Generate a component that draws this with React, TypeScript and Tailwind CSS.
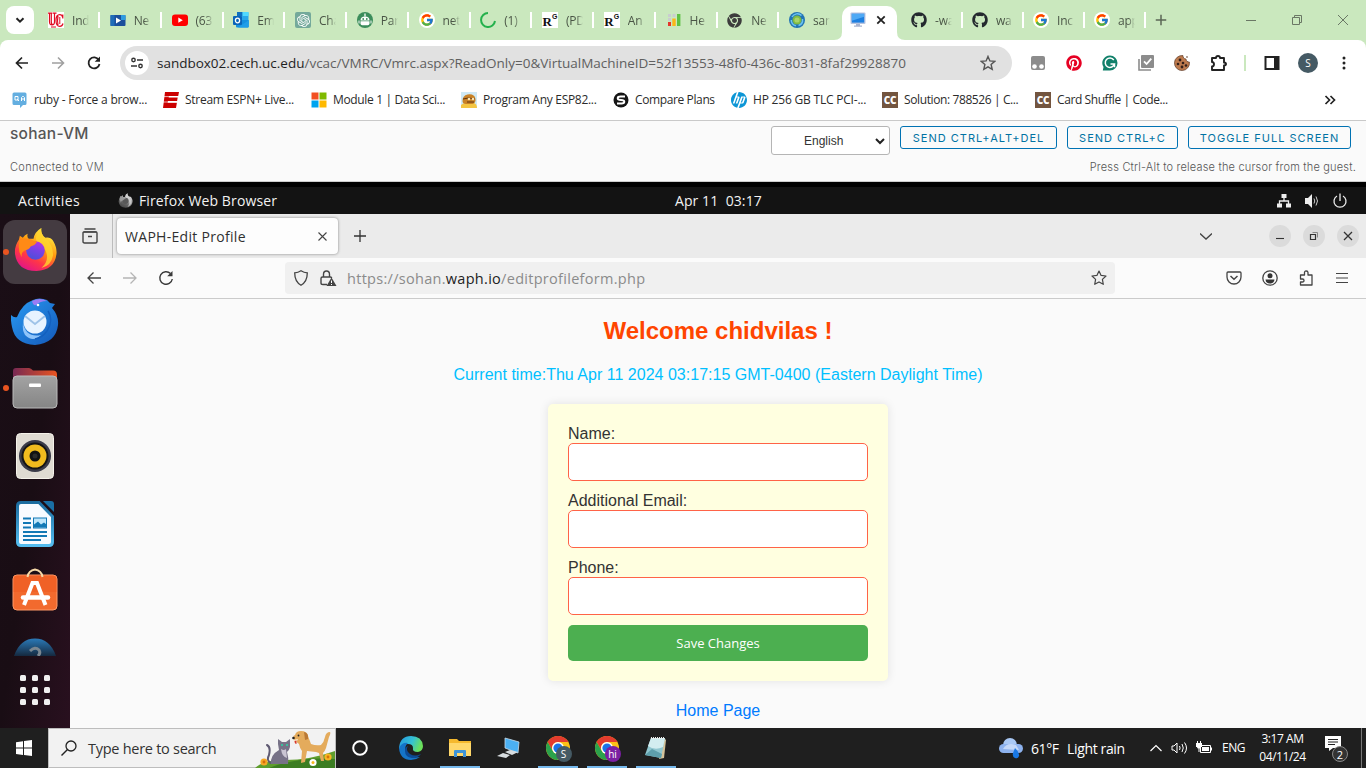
import React from "react";
import { FaGithub, FaPinterest, FaChrome } from "react-icons/fa";
import { FcGoogle } from "react-icons/fc";
import { SiOpenai, SiHp } from "react-icons/si";

type SvgProps = { className?: string; box?: string; children: React.ReactNode };

const Svg = ({ className = "size-4", box = "0 0 16 16", children }: SvgProps) => (
  <svg viewBox={box} className={`${className} shrink-0`} fill="none">
    {children}
  </svg>
);

/* ---------- Favicons ---------- */

const UcIcon = () => (
  <div className="size-4 shrink-0 bg-white">
    <Svg>
      <path d="M0 1.200h4.500M5 1.200h3.500M1.500 1.500v8q0 3.500 2.500 3.500t2.500-3.500V1.500M3.300 1.500v8.500q0 2 1.200 2.600" stroke="#e00b22" strokeWidth="1.200" />
      <path d="M14.800 5.500q-.8-2.800-3-2.800Q8 2.700 8 8.500t3.900 5.800q2.300 0 3.100-2.800M10 4q-1 4.500 0 9M14.800 2.500v4" stroke="#e00b22" strokeWidth="1.200" />
      <path d="M3 15h5M11.800 5v7" stroke="#e00b22" strokeWidth="1" />
    </Svg>
  </div>
);

const VideoIcon = () => (
  <Svg>
    <rect x="0.5" y="3" width="15" height="11" rx="1" fill="#1b4f9c" />
    <rect x="11" y="3" width="4.500" height="5" fill="#2e9be0" />
    <rect x="0.5" y="3" width="4" height="11" fill="#1f6cb8" />
    <path d="M6 5.500v6l5-3z" fill="#fff" />
  </Svg>
);

const YoutubeIcon = () => (
  <Svg>
    <rect x="0" y="2.500" width="16" height="11.500" rx="3" fill="#f00" />
    <path d="M6.300 5.600v5.200l4.500-2.600z" fill="#fff" />
  </Svg>
);

const OutlookIcon = () => (
  <Svg>
    <rect x="4" y="0" width="11.500" height="12" rx="1" fill="#28a8ea" />
    <rect x="4" y="0" width="5.500" height="4" fill="#0f6fc0" />
    <rect x="9.500" y="0" width="6" height="4" fill="#50d9ff" />
    <path d="M3 8h12.700v6.500q0 1-1 1H4q-1 0-1-1z" fill="#1490df" />
    <path d="M5 15.500l10.700-7.300v6.300q0 1-1 1z" fill="#1f9de8" />
    <rect x="0" y="4" width="9" height="9" rx="1" fill="#0a64b8" />
    <ellipse cx="4.500" cy="8.500" rx="2.100" ry="2.300" stroke="#fff" strokeWidth="1.300" />
  </Svg>
);

const ChatIcon = () => (
  <div className="flex size-4 shrink-0 items-center justify-center rounded-[2px] bg-[#74a99b] text-white">
    <SiOpenai className="size-[13px]" />
  </div>
);

const RobotIcon = () => (
  <Svg>
    <circle cx="8" cy="8" r="8" fill="#3b8d5b" />
    <path d="M8 1.500v3" stroke="#fff" strokeWidth="1.300" />
    <path d="M3.500 8.500q0-4 4.500-4t4.500 4z" fill="#fff" />
    <path d="M3.500 9.300h9v2.200q0 1.700-1.700 1.700H5.200q-1.700 0-1.700-1.700z" fill="#fff" />
    <circle cx="6.200" cy="7" r=".9" fill="#3b8d5b" />
    <circle cx="9.800" cy="7" r=".9" fill="#3b8d5b" />
    <path d="M2 8.500v3M14 8.500v3" stroke="#fff" />
  </Svg>
);

const GoogleIcon = () => (
  <div className="flex size-4 shrink-0 items-center justify-center rounded-full bg-white">
    <FcGoogle className="size-[14px]" />
  </div>
);

const SpinnerIcon = () => (
  <Svg>
    <path d="M8 1A7 7 0 1 0 15 9" stroke="#24b14c" strokeWidth="2" />
  </Svg>
);

const ResearchIcon = () => (
  <div className="flex size-4 shrink-0 items-start justify-center bg-white font-['Liberation_Serif',serif] leading-none text-[#111]">
    <span className="mt-[3px] text-[13px] font-bold">R</span>
    <span className="mt-px font-['Liberation_Sans',sans-serif] text-[7px] font-bold">G</span>
  </div>
);

const BarsIcon = () => (
  <Svg>
    <rect x="2" y="2" width="3" height="3" fill="#c9ccd0" />
    <rect x="6.500" y="2" width="3" height="3" fill="#c9ccd0" />
    <rect x="2" y="6" width="3" height="3" fill="#c9ccd0" />
    <rect x="2" y="10" width="3" height="4" fill="#e5352b" />
    <rect x="6.300" y="6.500" width="3.400" height="7.500" fill="#fbb617" />
    <rect x="11" y="2" width="3.400" height="12" fill="#5ec144" />
  </Svg>
);

const GlobeIcon = () => (
  <Svg>
    <circle cx="8" cy="8" r="8" fill="#2274b5" />
    <path d="M3 5a6 6 0 0 1 9.500-1.500M13.500 7a6 6 0 0 1-4 6.500M7 13.800A6 6 0 0 1 2.300 8" stroke="#6cc4f0" strokeWidth="1.500" />
    <circle cx="8" cy="8" r="4.500" fill="#7fba45" />
    <circle cx="8" cy="8" r="2.600" fill="#a8d468" />
  </Svg>
);

const MonitorIcon = () => (
  <Svg>
    <rect x="0.500" y="0.500" width="15" height="11.500" rx="1" fill="#b8c4e0" />
    <rect x="1.800" y="1.800" width="12.400" height="8.800" fill="#1d7fe0" />
    <path d="M1.800 1.800h12.400v3l-12.400 4z" fill="#4fa9f5" />
    <path d="M6 12h4v1.500h2v1.300H4v-1.300h2z" fill="#a9b4cf" />
  </Svg>
);

const CcIcon = () => (
  <div className="flex size-4 shrink-0 items-center justify-center bg-[#73553f] font-['Open_Sans',sans-serif] text-[10px] leading-none font-extrabold tracking-[-0.300px] text-white">
    CC
  </div>
);

const Ruby = () => (
  <Svg>
    <path d="M2 0.500h11q1.500 0 1.500 1.500v9.500q0 1.500-1.500 1.500h-2l-3 3v-3H2Q.5 13 .5 11.500V2Q.5.500 2 .500z" fill="#63aee0" />
    <path d="M3 4.500h3v3.500H3zM5 7l2 2M9.500 9V5.500l1-1h1l1 1V9M9.500 7h3" stroke="#fff" strokeWidth="1" />
  </Svg>
);

const Espn = () => (
  <Svg>
    <path d="M2 0h14l-.8 4H6l-.3 1.500h9l-.6 3.500H5l-.3 1.700h9.200L13 16H0z" fill="#c00" />
    <path d="M1 4.600h14M0 10h14" stroke="#fff" strokeWidth=".7" />
  </Svg>
);

const Microsoft = () => (
  <Svg>
    <path d="M.5.500h7v7h-7z" fill="#f25022" />
    <path d="M8.500.500h7v7h-7z" fill="#7fba00" />
    <path d="M.5 8.500h7v7h-7z" fill="#00a4ef" />
    <path d="M8.500 8.500h7v7h-7z" fill="#ffb900" />
  </Svg>
);

const Program = () => (
  <Svg>
    <rect width="16" height="16" fill="#cfe9f5" />
    <path d="M0 16v-3q2-2 5-2h8q3 1 3 5z" fill="#f4c542" />
    <path d="M1.500 9q0-5.500 5-6.500Q13.500 1.500 14.500 7q.5 4-3 5H5Q1.500 12 1.500 9z" fill="#c98226" />
    <path d="M2 7q5-2 12 0M6 10h7" stroke="#5e3311" strokeWidth="1" />
    <circle cx="8" cy="7" r="1.300" fill="#f8e3b0" />
    <circle cx="12" cy="7" r="1.300" fill="#f8e3b0" />
  </Svg>
);

const SpIcon = () => (
  <Svg>
    <circle cx="8" cy="8" r="7.500" fill="#151515" />
    <path d="M12 4.500H7.500q-2.800 0-2.800 1.700T8 8t3.300 1.800-2.800 1.700H4" stroke="#fff" strokeWidth="1.900" />
  </Svg>
);

/* ---------- Larger artwork ---------- */

const FirefoxLogo = ({ className }: { className: string }) => (
  <Svg className={className} box="0 0 44 46">
    <defs>
      <linearGradient id="ffBody" x1=".8" y1=".1" x2=".3" y2="1">
        <stop offset="0" stopColor="#fff044" />
        <stop offset=".4" stopColor="#ff980e" />
        <stop offset=".7" stopColor="#ff3647" />
        <stop offset="1" stopColor="#e31587" />
      </linearGradient>
      <linearGradient id="ffBall" x1=".7" y1="0" x2=".3" y2="1">
        <stop offset="0" stopColor="#b833e1" />
        <stop offset=".5" stopColor="#7542e5" />
        <stop offset="1" stopColor="#4a50d8" />
      </linearGradient>
    </defs>
    <path d="M28 1q-1 6 4 10 5-1 8 3 4 7 3.500 13Q42 44 23 45 3 45 1 27q-.5-8 4-14l1-4 3 2q2-3 5-4-1 3 1 5h5q1-7 8-11z" fill="url(#ffBody)" />
    <path d="M28 1q-1 6 4 10 8 7 8 18-2 11-12 13 8-7 5-16-2-6-7-9-8-5 2-16z" fill="#ffd52e" opacity=".8" />
    <circle cx="22" cy="24" r="9.500" fill="url(#ffBall)" />
    <path d="M6 13q4-2 8-1 3 0 6 2 4 0 3 2-2 3-6 4-1 3-6 4-4 2-3 7-5-8-2-18z" fill="#ff8a16" />
  </Svg>
);

const Thunderbird = () => (
  <Svg className="size-12" box="0 0 48 48">
    <defs>
      <linearGradient id="tb" x1="0" y1="0" x2="1" y2="1">
        <stop offset="0" stopColor="#2a9cf4" />
        <stop offset="1" stopColor="#1458b8" />
      </linearGradient>
    </defs>
    <path d="M0 17q3 3 6 2Q11 6 22 2q6-3 14 0l3 3 5 1-3 4q7 8 6 17-2 18-23 20Q4 46 1 29-.5 22 0 17z" fill="url(#tb)" />
    <path d="M21 3q8-4 15 0-7 0-11 4-3 1-4-4z" fill="#9a7cf4" />
    <path d="M12 25q3 15 18 12-8 8-16 0-3-5-2-12z" fill="#8fc4fa" />
    <circle cx="24" cy="24" r="11.500" fill="#e8f3ff" />
    <path d="M14 18l10 8 10-8" stroke="#9fc3e8" strokeWidth="1.800" />
    <path d="M37 13q6 9-1 20-5 7-12 8" stroke="#1460bf" strokeWidth="1.500" />
    <circle cx="27" cy="7" r="1.300" fill="#fff" />
  </Svg>
);

const Files = () => (
  <Svg className="h-[42px] w-[46px]" box="0 0 46 42">
    <defs>
      <linearGradient id="fl" x1="0" y1="0" x2="1" y2="0">
        <stop offset="0" stopColor="#772953" />
        <stop offset="1" stopColor="#e95420" />
      </linearGradient>
      <linearGradient id="fg" x1="0" y1="0" x2="0" y2="1">
        <stop offset="0" stopColor="#a3a3a3" />
        <stop offset="1" stopColor="#858585" />
      </linearGradient>
    </defs>
    <path d="M1 4q0-3 3-3h13q2 0 4 2.500h20q4 0 4 4V20H1z" fill="url(#fl)" />
    <rect x="1" y="9" width="44" height="32" rx="4" fill="url(#fg)" stroke="#bbb" />
    <rect x="17" y="16.500" width="12" height="3.500" rx="1" fill="#fff" />
  </Svg>
);

const Speaker = () => (
  <Svg className="h-[46px] w-[38px]" box="0 0 38 46">
    <rect x=".5" y=".5" width="37" height="45" rx="4" fill="#dfdbd2" stroke="#f5f2ea" />
    <circle cx="19" cy="23" r="16" fill="#3a3b48" />
    <circle cx="19" cy="23" r="13.500" fill="#151515" />
    <circle cx="19" cy="23" r="11.500" fill="#f0bb1e" />
    <circle cx="19" cy="23" r="5.500" fill="#121212" />
    <circle cx="19" cy="23" r="2.500" fill="#2b2b2b" />
  </Svg>
);

const Writer = () => (
  <Svg className="h-[46px] w-[38px]" box="0 0 38 46">
    <defs>
      <linearGradient id="wr" x1="0" y1="0" x2="0" y2="1">
        <stop offset="0" stopColor="#1b6c9f" />
        <stop offset="1" stopColor="#54bdf0" />
      </linearGradient>
    </defs>
    <path d="M5 1.500h18l13.500 14V41q0 3.500-3.500 3.500H5Q1.500 44.500 1.500 41V5q0-3.500 3.500-3.500z" fill="#f8fbff" stroke="url(#wr)" strokeWidth="3" />
    <path d="M27 0h8q3 0 3 3v8z" fill="#1a6fa5" />
    <path d="M7 17.500h8M7 22h8M7 26.500h8M7 31h24M7 35h24M7 39h18" stroke="#1278b5" strokeWidth="2" />
    <rect x="17.500" y="17" width="13" height="10" fill="#bfe6fb" stroke="#1278b5" />
    <path d="M18 26.500v-3l4-3 3 3 3-2 2.500 2v3z" fill="#1278b5" />
  </Svg>
);

const Software = () => (
  <Svg className="h-[43px] w-[46px]" box="0 0 46 43">
    <rect x="1" y="7" width="44" height="35" rx="4" fill="#f26a2e" stroke="#ff9a68" />
    <path d="M1.500 11q0-3.500 3.500-3.500h36q3.500 0 3.500 3.500v13h-43z" fill="#ef5c22" opacity=".6" />
    <path d="M15.500 9q1-6.500 7.500-7.500Q29.500 2.500 30.500 9" stroke="#f6d9a8" strokeWidth="2" />
    <path d="M12 37l8.500-22h4.500l8.500 22" stroke="#fff" strokeWidth="4" />
    <path d="M11 29.500h25" stroke="#fff" strokeWidth="4.500" strokeLinecap="round" />
  </Svg>
);

const Help = () => (
  <Svg className="h-[18px] w-[44px]" box="0 0 44 18">
    <defs>
      <linearGradient id="hp" x1="0" y1="0" x2="0" y2="1">
        <stop offset="0" stopColor="#2b7ab8" />
        <stop offset="1" stopColor="#15293f" />
      </linearGradient>
    </defs>
    <path d="M1 18Q7 .5 22 .5T43 18z" fill="url(#hp)" />
    <path d="M17 13q5-5 9-1 2 3-1 6" stroke="#7b8791" strokeWidth="3" />
  </Svg>
);

const Chrome = ({ badge }: { badge: "S" | "hi" }) => (
  <div className="relative size-6 shrink-0">
    <Svg className="size-6" box="0 0 24 24">
      <circle cx="12" cy="12" r="12" fill="#fbc116" />
      <path d="M1.600 6A12 12 0 0 1 22.400 6H12a6 6 0 0 0-5.200 9z" fill="#e33b2e" />
      <path d="M1.600 6l5.200 9A6 6 0 0 0 12 18l-.5 6A12 12 0 0 1 1.600 6z" fill="#2ba24c" />
      <path d="M17.200 15a6 6 0 0 1-5.200 3l-2.500 5.700 1.500.3z" fill="#2ba24c" />
      <circle cx="12" cy="12" r="6" fill="#fff" />
      <circle cx="12" cy="12" r="4.600" fill="#1a73e8" />
    </Svg>
    {badge === "S" ? (
      <div className="absolute top-[10px] left-[10px] flex size-4 items-center justify-center rounded-full bg-[#455a64] font-['Open_Sans',sans-serif] text-[10px] leading-none text-white">S</div>
    ) : (
      <div className="absolute top-[10px] left-[10px] flex size-4 items-center justify-center rounded-full bg-[#7b1fa2] font-['Open_Sans',sans-serif] text-[10px] leading-none text-white">hi</div>
    )}
  </div>
);

const Pets = () => (
  <Svg className="h-[39px] w-[80px]" box="0 0 80 39">
    <path d="M0 39q8-8 30-8 25 0 50-9v17z" fill="#5f9e2d" />
    <path d="M14 39q30-12 66-9v9z" fill="#3c7d22" />
    <path d="M16 34q-5-2-2-8 2-8-2-10" stroke="#5f5a72" strokeWidth="2" strokeLinecap="round" />
    <path d="M16 35q-1-9 8-14l-1-6 0-5 4 3h4l4-3v8q-1 4-3 5 2 6 1 12z" fill="#777287" />
    <path d="M26 20q3 2 5 0l1 9q-5-1-6-9z" fill="#c9c4d2" />
    <path d="M26 16h2M31 16h2" stroke="#3bbf9b" strokeWidth="2" />
    <path d="M46 34l1-12q-2-2-3-7l-5-4q-2-4 1-5 1-4 6-4 6 0 7 5l3 8q5 2 10 1 3-3 4-8 1-5 5-5 1 1-1 5l-3 11q-1 3-3 5l1 8h-3l-2-8-3-1-9-1-2 11z" fill="#e4ab5c" />
    <path d="M49 3q5 1 4 7l-3 1z" fill="#ba7935" />
    <path d="M38 11l5-1-2 4z" fill="#f8ead0" />
    <circle cx="38.500" cy="9" r="1.300" fill="#222" />
    <circle cx="43.500" cy="6.500" r=".9" fill="#222" />
    <path d="M39.500 12l2-.5v3.500q-2 0-2-3z" fill="#d8392b" />
    <circle cx="9" cy="33" r="3.600" fill="#f7a823" />
    <circle cx="9" cy="33" r="1.400" fill="#d56d0a" />
    <circle cx="73" cy="28" r="3.600" fill="#f7b523" />
    <circle cx="73" cy="28" r="1.400" fill="#d5720a" />
    <circle cx="58" cy="33.500" r="3.600" fill="#fff" />
    <circle cx="58" cy="33.500" r="1.500" fill="#f5b921" />
  </Svg>
);

/* ---------- Chrome tab strip ---------- */

const leftTabs: { icon: React.ReactNode; text: string }[] = [
  { icon: <UcIcon />, text: "Ind" },
  { icon: <VideoIcon />, text: "Ne" },
  { icon: <YoutubeIcon />, text: "(63" },
  { icon: <OutlookIcon />, text: "Em" },
  { icon: <ChatIcon />, text: "Cha" },
  { icon: <RobotIcon />, text: "Par" },
  { icon: <GoogleIcon />, text: "net" },
  { icon: <SpinnerIcon />, text: "(1)" },
  { icon: <ResearchIcon />, text: "(PD" },
  { icon: <ResearchIcon />, text: "An" },
  { icon: <BarsIcon />, text: "He" },
  { icon: <FaChrome className="mr-px size-[15px] shrink-0 text-[#3c3c3c]" />, text: "Ne" },
];

const rightTabs: { icon: React.ReactNode; text: string }[] = [
  { icon: <FaGithub className="size-4 shrink-0 text-[#24292f]" />, text: "-wa" },
  { icon: <FaGithub className="size-4 shrink-0 text-[#24292f]" />, text: "wa" },
  { icon: <GoogleIcon />, text: "Inc" },
  { icon: <GoogleIcon />, text: "app" },
];

const TabText = ({ children }: { children: string }) => (
  <span className="mt-px ml-2 w-[17px] overflow-hidden [mask-image:linear-gradient(to_right,black_60%,transparent)] text-[12px] leading-5 tracking-[-0.200px] whitespace-nowrap text-[#4a5546]">
    {children}
  </span>
);

const TabStrip = () => (
  <div className="flex h-10 shrink-0 items-center bg-[#cae8be]">
    <div className="ml-1.5 flex size-7 shrink-0 items-center justify-center rounded-lg bg-white">
      <Svg className="size-4"><path d="M4.500 6.200l3.500 3.400 3.500-3.400" stroke="#222" strokeWidth="2" /></Svg>
    </div>
    <div className="ml-3.5 flex">
      {leftTabs.map((t, i) => (
        <div key={i} className="flex w-[61.75px] shrink-0 items-center">
          {t.icon}
          <TabText>{t.text}</TabText>
          <span className="ml-[9px] h-4 w-0.5 shrink-0 bg-white" />
        </div>
      ))}
      <div className="flex w-[53px] items-center">
        <GlobeIcon />
        <TabText>san</TabText>
      </div>
    </div>
    <div className="relative mt-auto flex h-[34px] w-[55px] shrink-0 items-center rounded-t-[10px] bg-white pl-2">
      <Svg className="absolute bottom-0 -left-2 size-2" box="0 0 8 8"><path d="M8 0v8H0q8 0 8-8z" fill="#fff" /></Svg>
      <Svg className="absolute -right-2 bottom-0 size-2" box="0 0 8 8"><path d="M0 0v8h8Q0 8 0 0z" fill="#fff" /></Svg>
      <div className="-mt-1.5"><MonitorIcon /></div>
      <Svg className="-mt-1.5 ml-[9px] size-3" box="0 0 12 12"><path d="M2.300 2.300l7.400 7.400m0-7.400l-7.400 7.400" stroke="#222" strokeWidth="1.800" /></Svg>
    </div>
    <div className="ml-3.5 flex">
      {rightTabs.map((t, i) => (
        <div key={i} className="flex w-[61px] shrink-0 items-center">
          {t.icon}
          <TabText>{t.text}</TabText>
          <span className="ml-[9px] h-4 w-0.5 shrink-0 bg-white" />
        </div>
      ))}
    </div>
    <Svg className="size-3"><path d="M8 1v14M1 8h14" stroke="#5b6656" strokeWidth="2" /></Svg>
    <div className="ml-auto flex items-center gap-[34px] pr-[17px]">
      <Svg className="size-3" box="0 0 12 12"><path d="M1 6.500h10" stroke="#6a7765" /></Svg>
      <Svg className="size-3" box="0 0 12 12"><path d="M1.500 3.500h7v7h-7zM3.500 3.500v-2h7v7h-2" stroke="#6a7765" /></Svg>
      <Svg className="size-3" box="0 0 12 12"><path d="M1 1l10 10M11 1L1 11" stroke="#6a7765" /></Svg>
    </div>
  </div>
);

const Slot = ({ children }: { children: React.ReactNode }) => (
  <div className="flex w-9 shrink-0 items-center justify-center">{children}</div>
);

const AddressBar = () => (
  <div className="flex h-[46px] shrink-0 items-center bg-[#cae8be]">
    <div className="flex h-full w-full items-center rounded-t-lg bg-white pl-1">
      <Slot><Svg><path d="M14 8H3M8 2.500L2.500 8 8 13.500" stroke="#222" strokeWidth="1.700" /></Svg></Slot>
      <Slot><Svg><path d="M2 8h11M8 2.500L13.500 8 8 13.500" stroke="#a0a0a0" strokeWidth="1.600" /></Svg></Slot>
      <Slot><Svg><path d="M12.800 5A5.500 5.500 0 1 0 13.500 9" stroke="#222" strokeWidth="1.800" /><path d="M14 1.500v5.300H8.700z" fill="#222" /></Svg></Slot>
      <div className="ml-2 flex h-[34px] w-[892px] shrink-0 items-center rounded-full bg-[#e1e1e1] pl-[5px]">
        <div className="flex size-6 items-center justify-center rounded-full bg-white">
          <Svg className="size-[14px]" box="0 0 14 14"><circle cx="3.500" cy="4" r="1.700" stroke="#333" strokeWidth="1.400" /><circle cx="10.500" cy="10" r="1.700" stroke="#333" strokeWidth="1.400" /><path d="M7 4h6M1 10h6" stroke="#333" strokeWidth="1.500" /></Svg>
        </div>
        <span className="ml-2 w-[820px] text-[13.500px] tracking-[-0.010px] whitespace-nowrap text-[#606060]"><span className="text-[#1f1f1f]">sandbox02.cech.uc.edu</span>/vcac/VMRC/Vmrc.aspx?ReadOnly=0&amp;VirtualMachineID=52f13553-48f0-436c-8031-8faf29928870</span>
        <Svg className="ml-[3px] size-4"><path d="M8 1.400l1.900 4.500 4.900.4-3.700 3.200 1.100 4.800L8 11.800l-4.200 2.500 1.100-4.800L1.200 6.300l4.900-.4z" stroke="#555" strokeWidth="1.400" /></Svg>
      </div>
      <div className="ml-2 flex">
        <Slot><Svg><rect x="1" y="1" width="14" height="14" rx="2" fill="#8c8c8c" /><circle cx="4.500" cy="11.500" r="2.300" fill="#fff" /><circle cx="11.500" cy="11.500" r="2.300" fill="#fff" /></Svg></Slot>
        <Slot><FaPinterest className="size-4 text-[#e60023]" /></Slot>
        <Slot><Svg><path d="M8 .500a7.500 7.500 0 1 1 0 15H.800L1.500 12A7.500 7.500 0 0 1 8 .500z" fill="#11806a" /><path d="M11.800 5A4.700 4.700 0 1 0 12.500 9H8.500M12.500 8.500v3.800" stroke="#fff" strokeWidth="1.500" /></Svg></Slot>
        <Slot><Svg><path d="M1 4v11h12" stroke="#8c8c8c" strokeWidth="1.600" /><rect x="3" y="0" width="13" height="13" rx="1" fill="#8c8c8c" /><path d="M6 6.300L8.600 9l4.700-5.400" stroke="#fff" strokeWidth="1.800" /></Svg></Slot>
        <Slot><Svg><path d="M9 .600a3 3 0 0 0 3 3.400 3 3 0 0 0 3.400 3A7.500 7.500 0 1 1 9 .600z" fill="#bd7a4d" stroke="#5c3a26" strokeWidth=".7" /><circle cx="6" cy="5" r="1.400" fill="#34201a" /><circle cx="4" cy="9" r="1.300" fill="#34201a" /><circle cx="9" cy="8" r="1.300" fill="#34201a" /><circle cx="8" cy="12" r="1.400" fill="#34201a" /><circle cx="12" cy="10.500" r="1.300" fill="#34201a" /><circle cx="13" cy="2" r=".8" fill="#5c3a26" /></Svg></Slot>
        <Slot><Svg className="size-[18px]" box="0 0 18 18"><path d="M3 4h4q0-2 2-2t2 2h4v4.500q2 .2 2 1.500t-2 1.500V16H3v-3.500q2-.3 2-2.300T3 8z" stroke="#222" strokeWidth="1.900" strokeLinejoin="round" /></Svg></Slot>
      </div>
      <span className="ml-2 h-4 w-0.5 bg-[#cae8be]" />
      <div className="ml-2 flex">
        <Slot><Svg><path d="M1.500 2h13v12h-13z" stroke="#222" strokeWidth="2" /><path d="M10 2h5v12h-5z" fill="#222" /></Svg></Slot>
        <Slot><div className="flex size-5 items-center justify-center rounded-full bg-[#455a64] text-[10px] leading-none text-white">S</div></Slot>
        <Slot><Svg><circle cx="8" cy="3" r="1.500" fill="#222" /><circle cx="8" cy="8" r="1.500" fill="#222" /><circle cx="8" cy="13" r="1.500" fill="#222" /></Svg></Slot>
      </div>
    </div>
  </div>
);

const Bookmark = ({ icon, text, cls }: { icon: React.ReactNode; text: string; cls: string }) => (
  <div className={`flex shrink-0 items-center gap-[6px] ${cls}`}>
    {icon}
    <span className="whitespace-nowrap">{text}</span>
  </div>
);

const Bookmarks = () => (
  <div className="flex h-[35px] shrink-0 items-center border-b border-[#c9c9c9] bg-white pb-1.5 pl-3 text-[12px] text-[#2b2b2b]">
    <Bookmark cls="w-[151px] tracking-[-0.200px]" icon={<Ruby />} text="ruby - Force a brow..." />
    <Bookmark cls="w-[148px] tracking-[-0.270px]" icon={<Espn />} text="Stream ESPN+ Live..." />
    <Bookmark cls="w-[150px] tracking-[-0.340px]" icon={<Microsoft />} text="Module 1 | Data Sci..." />
    <Bookmark cls="w-[152px] tracking-[-0.290px]" icon={<Program />} text="Program Any ESP82..." />
    <Bookmark cls="w-[118px] tracking-[-0.380px]" icon={<SpIcon />} text="Compare Plans" />
    <Bookmark cls="w-[151px] tracking-[-0.200px]" icon={<SiHp className="size-4 shrink-0 text-[#0c96d6]" />} text="HP 256 GB TLC PCI-..." />
    <Bookmark cls="w-[153px] tracking-[-0.390px]" icon={<CcIcon />} text="Solution: 788526 | C..." />
    <Bookmark cls="w-[289px] tracking-[-0.410px]" icon={<CcIcon />} text="Card Shuffle | Code..." />
    <Svg className="size-3" box="0 0 12 12"><path d="M1.500 2L5.500 6l-4 4M6.500 2l4 4-4 4" stroke="#222" strokeWidth="1.700" /></Svg>
  </div>
);

/* ---------- VM console header ---------- */

const VmHeader = () => (
  <div className="flex h-[61px] shrink-0 justify-between border-b border-[#ccc] bg-[#fafafa] font-['Inter',sans-serif] text-[#565656]">
    <div className="flex flex-col pl-2.5">
      <span className="mt-[3px] text-[15.500px] leading-5 font-medium tracking-[0.250px]">sohan-VM</span>
      <span className="mt-[15px] text-[11px] leading-4 font-light tracking-[0.300px]">Connected to VM</span>
    </div>
    <div className="flex flex-col items-end pr-2.5">
      <div className="mt-[5px] mr-[5px] flex items-start gap-2.5 text-[11px] tracking-[1px] text-[#0072a3]">
        <div className="flex h-[29px] w-[119px] items-center rounded-[3px] border border-[#b5b5b5] bg-white font-['Liberation_Sans',sans-serif] text-[12px] tracking-normal text-[#333]">
          <span className="ml-8 w-[71px]">English</span>
          <Svg className="size-2.5" box="0 0 10 10"><path d="M1 3l4 4 4-4" stroke="#222" strokeWidth="2" /></Svg>
        </div>
        <div className="flex h-[23px] w-[157px] items-center justify-center rounded-[3px] border border-[#0072b3] pt-px whitespace-nowrap">SEND CTRL+ALT+DEL</div>
        <div className="flex h-[23px] w-[111px] items-center justify-center rounded-[3px] border border-[#0072b3] pt-px whitespace-nowrap">SEND CTRL+C</div>
        <div className="flex h-[23px] w-[163px] items-center justify-center rounded-[3px] border border-[#0072b3] pt-px whitespace-nowrap">TOGGLE FULL SCREEN</div>
      </div>
      <span className="mt-1 text-[11px] leading-4 font-light tracking-[0.190px] whitespace-nowrap">Press Ctrl-Alt to release the cursor from the guest.</span>
    </div>
  </div>
);

/* ---------- Guest desktop ---------- */

const GnomeBar = () => (
  <div className="flex h-8 shrink-0 items-center border-t-[5px] border-black bg-[#131313] text-[14px] text-[#f2f2f2]">
    <span className="ml-[18px] w-[100px] tracking-[0.450px]">Activities</span>
    <div className="flex w-[21px] grayscale"><FirefoxLogo className="size-[15px]" /></div>
    <span className="w-[536px] tracking-[0.120px]">Firefox Web Browser</span>
    <span className="tracking-[0.080px] whitespace-pre">Apr 11  03:17</span>
    <div className="ml-auto flex items-center gap-3 pr-[18px]">
      <Svg><path d="M5.500 1h5v4h-5zM1 10.500h5v4H1zM10 10.500h5v4h-5z" fill="#eee" /><path d="M8 4v4M3.500 11V8h9v3" stroke="#eee" strokeWidth="1.300" /></Svg>
      <Svg><path d="M1 5h3l4-4v14l-4-4H1z" fill="#eee" /><path d="M10 5.500q1.500 2.500 0 5M12 3.500q3 4.500 0 9" stroke="#ccc" /></Svg>
      <Svg><path d="M5 3A6 6 0 1 0 11 3M8 .500V8" stroke="#eee" strokeWidth="1.300" /></Svg>
    </div>
  </div>
);

const DockDot = () => <span className="absolute top-1/2 left-[3px] -mt-[3px] size-[6px] rounded-full bg-[#e95420]" />;

const Dock = () => (
  <div className="flex w-[70px] shrink-0 flex-col items-center bg-gradient-to-br from-[#1a0e16] via-[#190d14] to-[#29101f]">
    <div className="relative flex h-[75px] w-full items-center justify-center">
      <div className="flex size-16 items-center justify-center rounded-[12px] bg-[#443b41]"><FirefoxLogo className="mb-1 h-[45px] w-[43px]" /></div>
      <DockDot />
    </div>
    <div className="flex h-[65px] items-center"><Thunderbird /></div>
    <div className="relative flex h-[68px] w-full items-center justify-center"><Files /><DockDot /></div>
    <div className="flex h-[68px] items-center"><Speaker /></div>
    <div className="flex h-[68px] items-center"><Writer /></div>
    <div className="flex h-[64px] items-center pb-0.5"><Software /></div>
    <div className="mt-[16px]"><Help /></div>
    <Svg className="mt-[18px] size-[32px]" box="0 0 32 32">
      {[1, 13, 25].map((y) => [1, 13, 25].map((x) => <rect key={`${x}-${y}`} x={x} y={y} width="6" height="6" rx="1.500" fill="#f0f0f0" />))}
    </Svg>
  </div>
);

const FirefoxTabs = () => (
  <div className="flex h-11 shrink-0 items-center bg-[#ebebeb]">
    <div className="flex h-full w-[43px] items-center border-r border-[#bcbcbc] pl-3">
      <Svg className="size-4"><path d="M2.500 1h11M1.500 3.800h13" stroke="#444" strokeWidth="1.300" /><path d="M2 4h12q1 0 1 1v8.500q0 1.500-1.500 1.500h-11Q1 15 1 13.500V5q0-1 1-1zM6 8.500h4" stroke="#444" strokeWidth="1.400" /></Svg>
    </div>
    <div className="ml-[4px] flex h-[36px] w-[221px] items-center rounded-[4px] bg-[#fdfdfd] pl-2 text-[14px] text-[#303030] shadow-[0_0_3px_rgba(0,0,0,0.45)]">
      <span className="w-[193px] tracking-[0.300px] whitespace-nowrap">WAPH-Edit Profile</span>
      <Svg className="size-[9px]" box="0 0 9 9"><path d="M.5.500l8 8m0-8l-8 8" stroke="#444" strokeWidth="1.100" /></Svg>
    </div>
    <Svg className="ml-4 size-3" box="0 0 12 12"><path d="M6 0v12M0 6h12" stroke="#333" strokeWidth="1.300" /></Svg>
    <div className="ml-auto flex items-center gap-3 pr-[7px]">
      <Svg className="mr-[45px] size-3" box="0 0 12 12"><path d="M0 3.500l6 5.500 6-5.500" stroke="#444" strokeWidth="1.300" /></Svg>
      <div className="flex size-[22px] items-center justify-center rounded-full bg-[#dbdbdb]"><Svg className="size-2.5" box="0 0 10 10"><path d="M1 7.500h8" stroke="#333" strokeWidth="1.100" /></Svg></div>
      <div className="flex size-[22px] items-center justify-center rounded-full bg-[#dbdbdb]"><Svg className="size-2.5" box="0 0 10 10"><path d="M1.500 3.500h5v5h-5z" stroke="#333" strokeWidth="1.200" /><path d="M3.500 1.500h5v5" stroke="#888" /></Svg></div>
      <div className="flex size-[22px] items-center justify-center rounded-full bg-[#dbdbdb]"><Svg className="size-2.5" box="0 0 10 10"><path d="M1 1l8 8m0-8L1 9" stroke="#333" strokeWidth="1.300" /></Svg></div>
    </div>
  </div>
);

const FirefoxBar = () => (
  <div className="flex h-[41px] shrink-0 items-center border-b border-[#cbcbcb] bg-[#fbfbfb]">
    <div className="ml-1.5 flex">
      <Slot><Svg><path d="M15 8H2M7.500 2.500L2 8l5.500 5.500" stroke="#444" strokeWidth="1.300" /></Svg></Slot>
      <Slot><Svg><path d="M1 8h13M8.500 2.500L14 8l-5.500 5.500" stroke="#b5b5b5" strokeWidth="1.300" /></Svg></Slot>
      <Slot><Svg><path d="M12.500 3.500A6.300 6.300 0 1 0 14.300 9" stroke="#3a3a3a" strokeWidth="1.400" /><path d="M14.500 1v5.300H9.200z" fill="#3a3a3a" /></Svg></Slot>
    </div>
    <div className="ml-[101px] flex h-8 w-[830px] shrink-0 items-center rounded-[4px] bg-[#f0f0f0] pl-2">
      <Svg><path d="M8 .800q3 2 6.300 2 0 9-6.300 12.400Q1.700 11.800 1.700 2.800 5 2.800 8 .800z" stroke="#444" strokeWidth="1.300" /></Svg>
      <Svg className="ml-2.5 h-4 w-[18px]" box="0 0 18 16"><path d="M4.500 7V4.500q0-3.500 3-3.500t3 3.500V7M8 14.500H4q-2 0-2-1.500V8.500Q2 7 3.500 7h8q1 0 1.200 1" stroke="#444" strokeWidth="1.400" /><path d="M12.500 7.500L17.500 16h-10z" fill="#444" /><path d="M12.500 10.500v2.500M12.500 14v1" stroke="#fff" /></Svg>
      <span className="mt-px ml-2.5 w-[744px] text-[14.500px] tracking-[0.290px] whitespace-nowrap text-[#8b8b8b]">https://sohan.<span className="text-[#222]">waph.io</span>/editprofileform.php</span>
      <Svg><path d="M8 1l2.100 4.400 4.900.6-3.600 3.400.9 4.900L8 11.900l-4.300 2.400.9-4.900L1 6l4.900-.6z" stroke="#444" strokeWidth="1.200" strokeLinejoin="round" /></Svg>
    </div>
    <div className="ml-auto flex pr-1.5">
      <Slot><Svg><path d="M2 2h12q1 0 1 1v4a7 7 0 0 1-14 0V3q0-1 1-1z" stroke="#444" strokeWidth="1.300" /><path d="M4.500 6L8 9.200 11.500 6" stroke="#444" strokeWidth="1.500" /></Svg></Slot>
      <Slot><Svg><circle cx="8" cy="8" r="7.200" stroke="#444" strokeWidth="1.300" /><circle cx="8" cy="5.800" r="2.500" fill="#333" /><path d="M3.500 9.500h9q-.5 4-4.500 4t-4.500-4z" fill="#333" /></Svg></Slot>
      <Slot><Svg><path d="M2.500 5h4V2.500q0-1.500 1.700-1.500T10 2.500V5h4v10H2.500v-3h2q1.500 0 1.500-1.500T4.500 9h-2z" stroke="#444" strokeWidth="1.300" strokeLinejoin="round" /></Svg></Slot>
      <Slot><Svg className="size-3" box="0 0 12 12"><path d="M0 1.500h12M0 6h12M0 10.500h12" stroke="#444" strokeWidth="1.200" /></Svg></Slot>
    </div>
  </div>
);

const Field = ({ label }: { label: string }) => (
  <label className="mb-2.5 flex flex-col">
    <span className="h-[19px] leading-[19px]">{label}</span>
    <input className="h-[38px] w-full rounded-[5px] border border-[#ff6347] bg-white" />
  </label>
);

const ProfilePage = () => (
  <div className="flex min-h-0 flex-1 flex-col items-center overflow-hidden bg-[#fafafa] font-['Liberation_Sans',Arial,sans-serif] text-[16px] text-[#333]">
    <h2 className="mt-[18px] text-[24px] leading-7 font-bold text-[#ff4500]">Welcome chidvilas !</h2>
    <p className="mt-5 leading-[19px] tracking-[0.015px] text-[#00bfff]">Current time:Thu Apr 11 2024 03:17:15 GMT-0400 (Eastern Daylight Time)</p>
    <form className="mt-5 w-[340px] rounded-[5px] bg-[#ffffe0] p-5 shadow-[0_0_10px_rgba(0,0,0,0.1)]">
      <Field label="Name:" />
      <Field label="Additional Email:" />
      <Field label="Phone:" />
      <button type="button" className="block h-9 w-full rounded-[5px] bg-[#4caf50] pt-px font-['Open_Sans',sans-serif] text-[13px] text-white">Save Changes</button>
    </form>
    <a className="mt-5 leading-[19px] text-[#007bff]">Home Page</a>
  </div>
);

/* ---------- Windows taskbar ---------- */

const TaskItem = ({ children, active = false }: { children: React.ReactNode; active?: boolean }) => (
  <div className="flex h-full w-[49px] shrink-0 flex-col items-center">
    <div className="flex flex-1 items-center pt-0.5">{children}</div>
    <span className={active ? "h-0.5 w-10 bg-[#76b9ed]" : "h-0.5 w-10"} />
  </div>
);

const Taskbar = () => (
  <div className="flex h-10 shrink-0 items-center bg-[#1f1f1f] text-white">
    <div className="flex w-12 justify-center"><Svg><path d="M0 2.200L7 1.200v6.400H0zM8 1.100L16 0v7.600H8zM0 8.500h7v6.400L0 14zM8 8.500h8V16l-8-1.100z" fill="#fff" /></Svg></div>
    <div className="flex h-10 w-72 shrink-0 items-center border border-[#bdbdbd] bg-[#f2f2f2] pl-3">
      <Svg className="size-4"><circle cx="10" cy="6" r="5" stroke="#222" strokeWidth="1.300" /><path d="M6.500 9.500L.5 15.500" stroke="#222" strokeWidth="1.400" /></Svg>
      <span className="ml-[11px] w-[168px] pt-px text-[14.500px] tracking-[-0.270px] whitespace-nowrap text-[#333]">Type here to search</span>
      <Pets />
    </div>
    <div className="flex h-full">
      <div className="flex h-full w-[50px] items-center justify-center pr-0.5"><Svg><circle cx="8" cy="8" r="6.800" stroke="#fff" strokeWidth="2" /></Svg></div>
      <TaskItem>
        <Svg className="size-6" box="0 0 24 24">
          <defs><linearGradient id="ed" x1="0" y1="0" x2="1" y2=".3"><stop offset="0" stopColor="#2497e0" /><stop offset=".6" stopColor="#35c1d4" /><stop offset="1" stopColor="#6be05b" /></linearGradient></defs>
          <path d="M0 12Q1 0 12 0q11 0 12 10 0 5-5 6-6 0-5-4 0-4-5-4-6 0-9 5z" fill="url(#ed)" />
          <path d="M0 12q3-6 9-5-4 3-2 9 3 7 14 5-4 3-9 3Q1 24 0 12z" fill="#1574c8" />
          <path d="M9 10q-3 4 2 8 5 3 11 0-3 4-9 4-7-1-7-7 0-4 3-5z" fill="#0c4a96" />
        </Svg>
      </TaskItem>
      <TaskItem active><Svg className="h-5 w-6" box="0 0 24 20"><path d="M1 1h8l2 2h12v15H1z" fill="#f5b92e" /><path d="M1 5h22v13H1z" fill="#ffd86b" /><path d="M6 19v-6q0-1 1-1h10q1 0 1 1v6h-3v-4H9v4z" fill="#3e94d8" /></Svg></TaskItem>
      <TaskItem><Svg className="size-6" box="0 0 24 24"><path d="M8 2l14 4-1 11L8 12z" fill="#4bb0f2" stroke="#c8dbe8" strokeWidth=".8" /><path d="M0 20l6-3 7 2-4 3zM8 16l5-2 8 2-6 3z" fill="#d8dde0" /></Svg></TaskItem>
      <TaskItem active><Chrome badge="S" /></TaskItem>
      <TaskItem active><Chrome badge="hi" /></TaskItem>
      <TaskItem active><Svg className="size-6" box="0 0 24 24"><path d="M20 2l2 2-2 18-5 1z" fill="#d5c39a" /><path d="M7 2h14l-4 20-16-3z" fill="#8fc6cf" /><path d="M7 2h14l-2 9q-8 4-15-1z" fill="#d2edf0" /><path d="M7 2h14" stroke="#eee" strokeWidth="2" strokeDasharray="1 1" /><path d="M1 19l7-6 10 5-1 4z" fill="#5e9fab" /></Svg></TaskItem>
    </div>
    <div className="ml-auto flex items-center">
      <Svg className="h-[22px] w-6" box="0 0 24 22"><circle cx="11" cy="8" r="7" fill="#a9c8f5" /><rect y="7" width="24" height="9" rx="4.500" fill="#8db2ee" /><path d="M4 12q4-7 13-4l3 5z" fill="#c4d8f8" /><path d="M16 11q5 5 4 8-1 3-4 2-3-1-2-5z" fill="#1978e5" /></Svg>
      <span className="ml-2 w-9 text-[14px] tracking-[-0.400px]">61°F</span>
      <span className="w-[83px] text-[14px] tracking-[-0.350px] whitespace-nowrap">Light rain</span>
      <Svg className="size-3" box="0 0 12 12"><path d="M.5 9L6 3.500 11.500 9" stroke="#fff" strokeWidth="1.200" /></Svg>
      <Svg className="ml-[9px] h-4 w-[18px]" box="0 0 18 16"><path d="M1 6h2l3-3v10l-3-3H1zM8.500 6q1.200 2 0 4M11 4q2.500 4 0 8M13.500 2.500q4 5.500 0 11" stroke="#fff" /></Svg>
      <Svg className="ml-[7px] size-4"><path d="M4.500 5.500h10v7h-10z" stroke="#fff" /><path d="M6 7h7v4H6zM15 7.500h1v3h-1zM0 3h6v4H5q0 1.500-1.500 1.500V12h-1V8.500Q1 8.500 1 7H0zM1 1h1v2H1zM4 1h1v2H4z" fill="#fff" /></Svg>
      <span className="ml-2.5 w-[37px] text-[12px] tracking-[-0.500px]">ENG</span>
      <div className="flex w-[47px] flex-col items-center text-[12px] leading-[18px] tracking-[-0.450px] whitespace-nowrap"><span>3:17 AM</span><span>04/11/24</span></div>
      <div className="relative ml-[18px] h-[26px] w-[27px]">
        <Svg className="h-4 w-[18px]" box="0 0 18 16"><path d="M1 1h16v12H9l-4 3v-3H1z" fill="#fff" /><path d="M4 4.500h10M4 7h10M4 9.500h7" stroke="#222" /></Svg>
        <div className="absolute top-[11px] left-2 flex size-4 items-center justify-center rounded-full border border-[#888] bg-[#333] text-[11px] leading-none">2</div>
      </div>
      <span className="ml-[10px] h-10 w-px bg-[#777]" />
      <span className="w-1" />
    </div>
  </div>
);

export default function App() {
  return (
    <div className="flex h-[768px] w-[1366px] flex-col overflow-hidden bg-white font-['Open_Sans',sans-serif]">
      <TabStrip />
      <AddressBar />
      <Bookmarks />
      <VmHeader />
      <GnomeBar />
      <div className="flex h-[514px] shrink-0">
        <Dock />
        <div className="flex min-w-0 flex-1 flex-col">
          <FirefoxTabs />
          <FirefoxBar />
          <ProfilePage />
        </div>
      </div>
      <Taskbar />
    </div>
  );
}
